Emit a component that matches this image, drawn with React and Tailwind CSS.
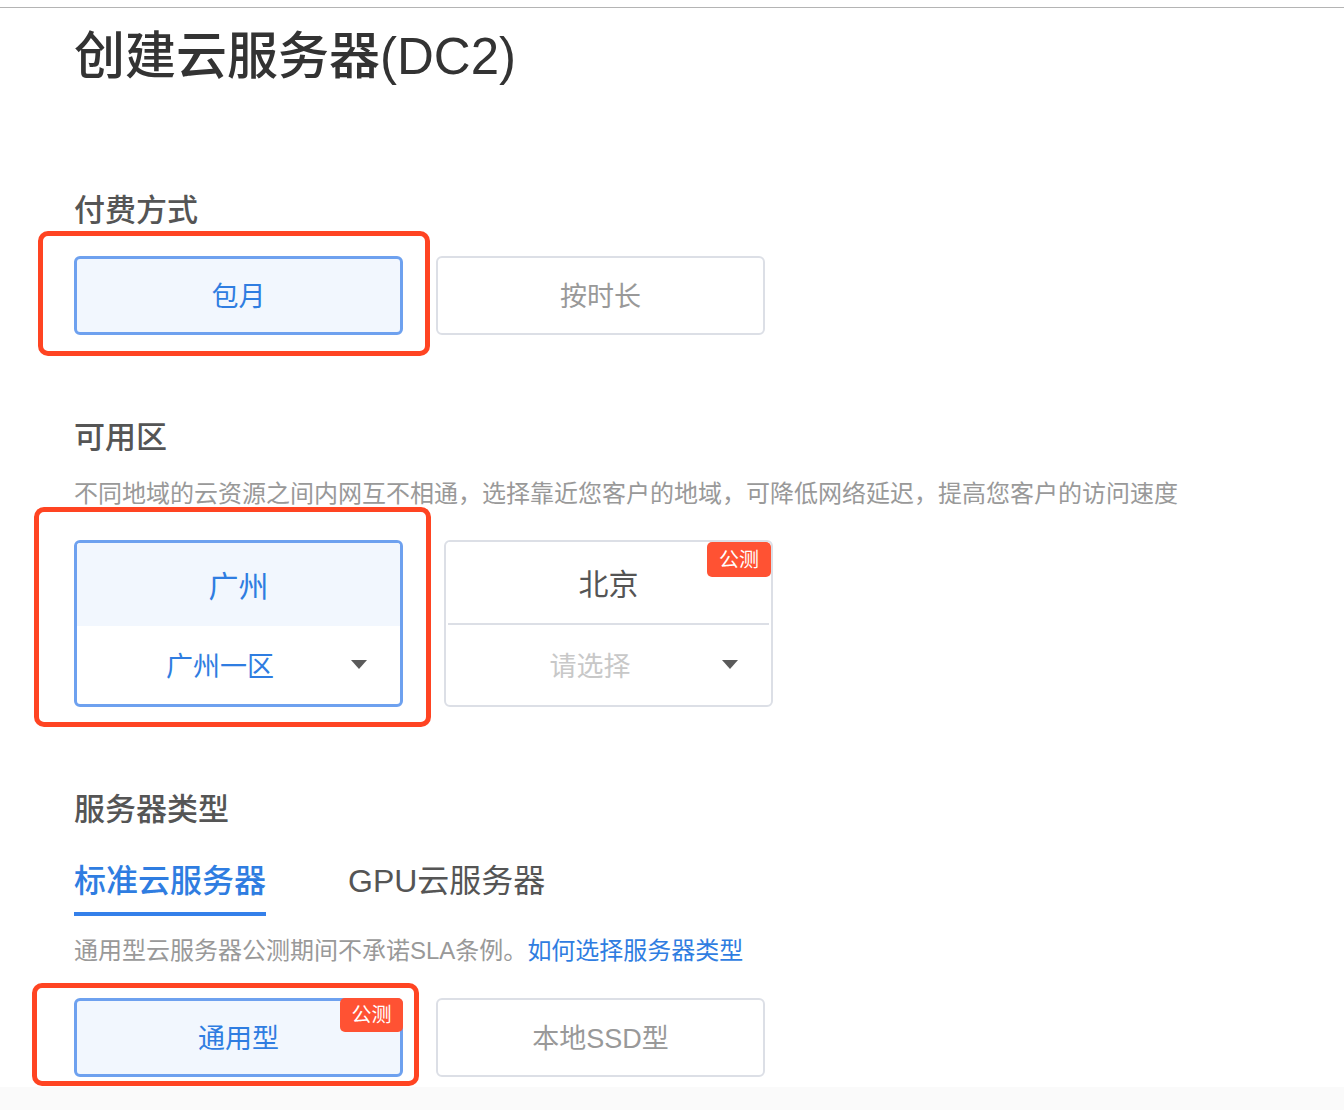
import React from "react";

const font = { fontFamily: '"Liberation Sans", "Noto Sans CJK SC", sans-serif' };

function Caret({ className }) {
  return (
    <svg width="16" height="9" viewBox="0 0 16 9" className={className}>
      <path d="M0 0 H16 L8 9 Z" fill="#5a5a5a" />
    </svg>
  );
}

function Badge({ className }) {
  return (
    <div
      className={
        "absolute flex items-center justify-center bg-[#ff5233] text-white text-[20px] leading-none rounded-[5px] " +
        className
      }
    >
      公测
    </div>
  );
}

function RedFrame({ className }) {
  return (
    <div
      className={
        "absolute pointer-events-none border-[5px] border-[#ff4422] rounded-[10px] " + className
      }
    />
  );
}

function OptionButton({ label, active, badge, frame }) {
  return (
    <div className="relative">
      {frame}
      <button
        className={
          "relative w-[329px] h-[79px] pt-[4px] rounded-[6px] text-[27px] flex items-center justify-center " +
          (active
            ? "border-[3px] border-[#6ea1ef] bg-[#f2f7fe] text-[#2f7de1]"
            : "border-2 border-[#dcdfe6] bg-white text-[#999]")
        }
      >
        {label}
        {badge}
      </button>
    </div>
  );
}

function RegionCard({ city, zone, active, badge, frame }) {
  return (
    <div className="relative">
      {frame}
      <div
        className={
          "relative w-[329px] h-[167px] rounded-[6px] flex flex-col overflow-hidden " +
          (active ? "border-[3px] border-[#6ea1ef]" : "border-2 border-[#dcdfe6]")
        }
      >
        {badge}
        <div
          className={
            "h-[83px] pt-[4px] flex items-center justify-center text-[30px] " +
            (active ? "bg-[#f2f7fe] text-[#2f7de1]" : "bg-white text-[#555] border-b-2 border-[#dcdfe6] mx-[2px]")
          }
        >
          {city}
        </div>
        <div className="flex-1 flex items-center pl-[12px]">
          <span className={"flex-1 text-center text-[27px] pt-[4px] " + (active ? "text-[#2f7de1]" : "text-[#c8c8c8]")}>
            {zone}
          </span>
          <Caret className="mr-[33px] -mt-[1px]" />
        </div>
      </div>
    </div>
  );
}

function SectionTitle({ children, className = "" }) {
  return <div className={"h-[40px] leading-[40px] text-[31px] text-[#555] font-medium " + className}>{children}</div>;
}

export default function App() {
  return (
    <div className="min-h-[1110px] bg-white flex flex-col" style={font}>
      <div className="h-[7px]" />
      <div className="border-t border-[#b4b4b4]" />
      <div className="pl-[74px] flex flex-col">
        <h1 className="mt-[19px] h-[60px] leading-[60px] text-[51px] text-[#333] font-medium">创建云服务器(DC2)</h1>

        <SectionTitle className="mt-[104px]">付费方式</SectionTitle>
        <div className="mt-[25px] flex gap-[33px]">
          <OptionButton
            label="包月"
            active
            frame={<RedFrame className="-left-[36px] -right-[27px] -top-[25px] -bottom-[21px]" />}
          />
          <OptionButton label="按时长" />
        </div>

        <SectionTitle className="mt-[83px]">可用区</SectionTitle>
        <p className="mt-[20px] h-[32px] leading-[32px] text-[24px] text-[#999]">
          不同地域的云资源之间内网互不相通，选择靠近您客户的地域，可降低网络延迟，提高您客户的访问速度
        </p>
        <div className="mt-[30px] flex gap-[41px]">
          <RegionCard
            city="广州"
            zone="广州一区"
            active
            frame={<RedFrame className="-left-[40px] -right-[28px] -top-[33px] -bottom-[20px]" />}
          />
          <RegionCard
            city="北京"
            zone="请选择"
            badge={<Badge className="top-0 right-0 w-[64px] h-[35px]" />}
          />
        </div>

        <SectionTitle className="mt-[83px]">服务器类型</SectionTitle>
        <div className="mt-[29px] flex gap-[82px]">
          <div className="flex flex-col">
            <span className="h-[44px] leading-[44px] text-[32px] text-[#2f7de1] font-medium">标准云服务器</span>
            <span className="mt-[9px] h-[4px] bg-[#3480ea]" />
          </div>
          <span className="h-[44px] leading-[44px] text-[32px] text-[#555]">GPU云服务器</span>
        </div>
        <p className="mt-[19px] h-[32px] leading-[32px] text-[24px] text-[#999]">
          通用型云服务器公测期间不承诺SLA条例。<a className="text-[#2f7de1]">如何选择服务器类型</a>
        </p>
        <div className="mt-[31px] flex gap-[33px]">
          <OptionButton
            label="通用型"
            active
            badge={<Badge className="-top-[3px] -right-[3px] w-[63px] h-[34px]" />}
            frame={<RedFrame className="-left-[42px] -right-[16px] -top-[15px] -bottom-[9px]" />}
          />
          <OptionButton label="本地SSD型" />
        </div>
      </div>
      <div className="mt-[10px] flex-1 bg-[#fafafa]" />
    </div>
  );
}
